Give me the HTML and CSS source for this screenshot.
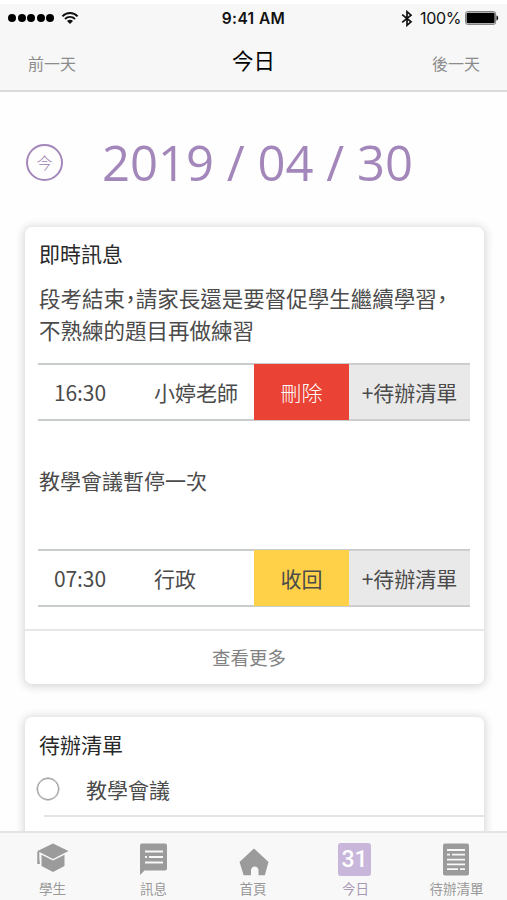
FILE: index.html
```html
<!DOCTYPE html>
<html lang="zh-Hant">
<head>
<meta charset="utf-8">
<title>今日</title>
<link rel="stylesheet" href="styles.css">
</head>
<body>
<div class="screen">
  <header class="header">
    <div class="status">
      <div class="signal">
        <i></i><i></i><i></i><i></i><i></i>
        <svg class="wifi" width="18" height="14" viewBox="0 0 18 14" fill="none" stroke="#111" stroke-width="1.9"><path d="M1.4 5.3C5.6.9 12.4.9 16.6 5.3M4 8C6.8 5.1 11.2 5.1 14 8"/><path d="M6 9.9C7.6 8.3 10.4 8.3 12 9.9L9 13z" fill="#111" stroke="none"/></svg>
      </div>
      <div class="clock">9:41 AM</div>
      <div class="power">
        <svg width="12" height="17" viewBox="0 0 12 17" fill="none" stroke="#111" stroke-width="1.7"><path d="M1.2 4.6 10 11.8 6 15.3V1.7L10 5.2 1.2 12.4"/></svg>
        <span>100%</span>
        <svg class="battery" width="34" height="14" viewBox="0 0 34 14"><rect x=".6" y=".6" width="30" height="12.8" rx="2" fill="#f7f7f7" stroke="#777"/><rect x="1.6" y="1.7" width="28" height="10.6" rx="1"/><path d="M31.5 4.5c2.2.4 2.2 4.6 0 5z"/></svg>
      </div>
    </div>
    <nav class="daynav"><span>前一天</span><h1>今日</h1><span class="next">後一天</span></nav>
  </header>
  <main class="content">
    <div class="date-row"><span class="today">今</span><span class="date">2019 / 04 / 30</span></div>
    <section class="card news">
      <h2>即時訊息</h2>
      <p class="message first">段考結束，請家長還是要督促學生繼續學習，<br>不熟練的題目再做練習</p>
      <div class="row"><span class="time">16:30</span><span class="who">小婷老師</span><span class="action delete">刪除</span><span class="action add">+待辦清單</span></div>
      <p class="message second">教學會議暫停一次</p>
      <div class="row"><span class="time">07:30</span><span class="who">行政</span><span class="action recall">收回</span><span class="action add">+待辦清單</span></div>
      <div class="more">查看更多</div>
    </section>
    <section class="card todo">
      <h2>待辦清單</h2>
      <div class="task"><i class="check"></i><span>教學會議</span></div>
      <div class="rule"></div>
    </section>
  </main>
  <footer class="tabs">
    <div class="tab"><svg width="34" height="34" viewBox="0 0 34 34"><path d="M1.5 9 17 1.5 32.5 9 17 17zM5.5 12.8l11.5 5.6 11.5-5.6v11.3L17 30 5.5 24zM1.3 9.5h2V16l.6 6H1.3z"/></svg><span>學生</span></div>
    <div class="tab"><svg width="34" height="34" viewBox="0 0 34 34"><path d="M5 1.5h23q2 0 2 2v23q0 2-2 2H7.5L3 33V3.5q0-2 2-2z"/><path class="lines" d="M8 9.5h18M8 15h2m2 0h14M8 20.5h18"/></svg><span>訊息</span></div>
    <div class="tab home"><svg width="34" height="34" viewBox="0 0 34 34"><path d="M16 6.5 30.5 20l-3.7 13.3h-6.3v-5c0-5.2-7.5-5.2-7.5 0v5H5.7L1.5 20z"/></svg><span>首頁</span></div>
    <div class="tab active"><div class="calendar">31</div><span>今日</span></div>
    <div class="tab list"><svg width="34" height="34" viewBox="0 0 34 34"><rect x="3" y="1.5" width="26" height="32" rx="2"/><path class="lines" d="M7 8h18M7 12.7h3m2 0h13M7 17.6h18M7 22.4h18M7 27.2h11m2 0h5"/></svg><span>待辦清單</span></div>
  </footer>
</div>
</body>
</html>
```
FILE: styles.css
```css
* { box-sizing: border-box; }
body { margin: 0; background: #fefefe; color: #4b4b4b; font-family: "Noto Sans CJK TC", sans-serif; }
h1, h2, p { margin: 0; font-weight: 400; }
svg { display: block; flex: none; }
.screen { height: 900px; display: flex; flex-direction: column; overflow: hidden; }
.header { height: 92px; flex: none; border-top: 4px solid #fff; border-bottom: 2px solid #dadada; background: #f7f7f7; }
.status { height: 28px; display: grid; grid-template-columns: 1fr auto 1fr; align-items: center; padding: 0 8px; font-family: Inter, sans-serif; color: #111; }
.signal, .power { display: flex; align-items: center; }
.signal { gap: 1.4px; }
.signal i { width: 8px; height: 8px; border-radius: 50%; background: #000; margin-left: .1px; }
.wifi { margin-left: 6px; }
.clock { font-size: 15.5px; font-weight: 600; letter-spacing: .4px; }
.power { justify-content: flex-end; }
.power span { font-size: 16px; letter-spacing: -.35px; margin: 0 4px 0 7px; }
.daynav { display: grid; grid-template-columns: 1fr auto 1fr; align-items: center; height: 56px; padding: 0 27px 0 28px; font-size: 16px; line-height: 24px; color: #8c8c8c; }
.daynav span { padding-top: 5px; }
.daynav h1 { font-size: 21.5px; line-height: 30px; font-weight: 400; color: #000; margin-right: 1px; }
.next { text-align: right; }
.content { flex: 1; min-height: 0; overflow: hidden; padding: 0 23px 0 25px; }
.date-row { display: flex; align-items: center; height: 135px; padding: 5px 0 0 1px; }
.today { width: 37px; height: 37px; border: 2.5px solid #a487ba; border-radius: 50%; display: grid; place-items: center; font-size: 16px; line-height: 30px; font-weight: 300; color: #9b82ae; }
.date { margin-left: 39px; font: 400 49px/60px "Open Sans", "Noto Sans", sans-serif; color: #a487ba; white-space: nowrap; }
.card { background: #fff; border-radius: 7px; box-shadow: 0 1px 8px 2px rgba(0,0,0,.15); }
.card h2 { padding: 11px 14px 0; font-size: 21px; line-height: 32px; color: #292929; }
.news { height: 457px; }
.news h2 { padding-top: 10px; }
.message { padding-left: 14px; font-size: 21.5px; line-height: 32px; white-space: nowrap; }
.first { height: 94px; padding-top: 13px; font-feature-settings: "halt"; }
.second { height: 128px; padding-top: 43px; font-size: 21px; }
.row { height: 58px; margin: 0 14px 0 13px; background: linear-gradient(#c8cccb, #c8cccb) 0 0 / 100% 2px no-repeat, linear-gradient(#c8cccb, #c8cccb) 0 100% / 100% 2px no-repeat; padding: 1px 0; display: grid; grid-template-columns: 116px 100px 95px 1fr; font-size: 21px; line-height: 57px; }
.row > span { height: 56px; }
.time { padding-left: 16px; letter-spacing: -.1px; }
.action { text-align: center; }
.delete { background: #ea4234; color: #fff; font-weight: 300; }
.recall { background: #ffd148; }
.add { background: #e9e9e9; border: solid #cfcfcf; border-width: 1px 0; line-height: 55px; }
.more { margin-top: 22px; border-top: 2px solid #e7e7e7; text-align: center; padding-right: 11px; font-size: 18.5px; line-height: 53px; color: #828282; }
.todo { margin-top: 33px; height: 200px; }
.task { display: flex; align-items: center; height: 55px; padding: 2px 0 0 12px; font-size: 21px; line-height: 32px; }
.check { width: 22px; height: 22px; border: 1px solid #969696; border-radius: 50%; margin-right: 27px; box-shadow: 0 0 0 .4px #969696; }
.rule { height: 2px; background: #e5e5e5; margin: 0 0 0 19px; }
.tabs { flex: none; height: 69px; border-top: 2px solid #e4e4e4; background: #f8f8f8; display: grid; grid-template-columns: repeat(5, 1fr); padding: 9px 0 0 2px; }
.tab { display: flex; flex-direction: column; align-items: center; font-size: 13.5px; line-height: 20px; color: #999; white-space: nowrap; }
.tab svg { fill: #9b9b9b; }
.tab span { margin-top: 2px; }
.home span { margin-left: -3px; }
.tab .lines { stroke: #f8f8f8; stroke-width: 1.8; fill: none; }
.calendar { width: 33px; height: 33px; margin: 1px 2px 0 0; border-radius: 3px; background: #c8b6db; color: #fff; font: 500 23px/33px Roboto, sans-serif; text-align: center; }
.active { color: #a898b4; }
```
